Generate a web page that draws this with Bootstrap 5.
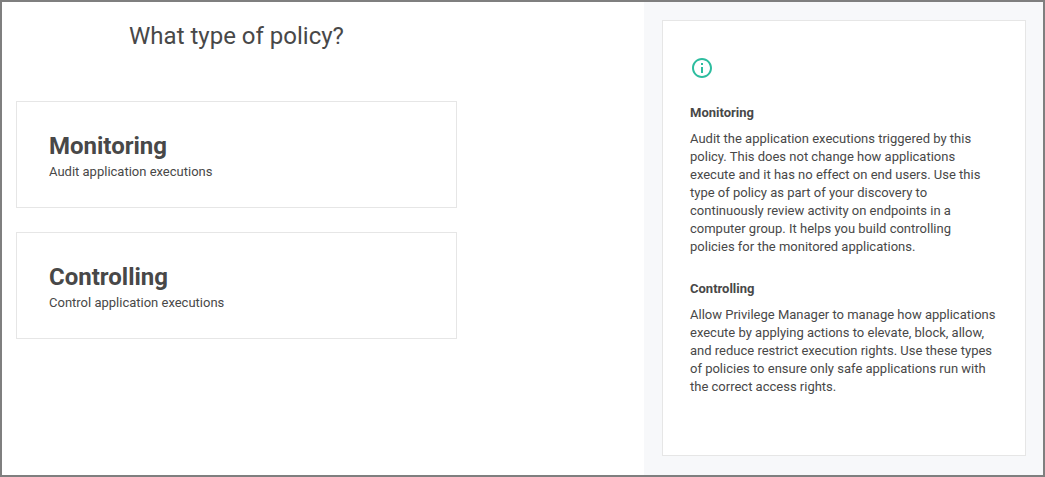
<!DOCTYPE html>
<html lang="en">
<head>
<meta charset="utf-8">
<title>Policy type</title>
<link href="https://cdn.jsdelivr.net/npm/bootstrap@5.3.0/dist/css/bootstrap.min.css" rel="stylesheet">
<style>
body{font-family:Roboto,"Liberation Sans",sans-serif;font-size:13px;line-height:18px;color:#484848;height:477px;overflow:hidden}
.frame{height:477px;border:2px solid #7f7f7f}
.choices{width:642px;padding:19px 14px 0}
.page-title{font-size:24px;line-height:30px;font-weight:400;width:441px;margin-bottom:50px}
.choice{width:441px;height:107px;border:1px solid #e6e6e6;border-radius:0;padding:28px 32px 0;margin-bottom:24px;color:inherit}
.choice h2{font-size:24px;line-height:32px;font-weight:700;margin:0 0 1px}
.side{background:#f7f8fa;padding:18px 17px 19px 18px}
.info{border:1px solid #e6e6e6;border-radius:0;padding:35px 27px 0;color:inherit}
.info h3{font-size:13px;line-height:18px;font-weight:700;margin:0 0 8px}
.info p{margin:0 0 24px}
.info svg{margin-bottom:24px}
</style>
</head>
<body>
<div class="frame d-flex bg-white">
<main class="choices flex-shrink-0">
<h1 class="page-title text-center">What type of policy?</h1>
<a class="card choice text-decoration-none" href="#"><h2>Monitoring</h2><span>Audit application executions</span></a>
<a class="card choice text-decoration-none" href="#"><h2>Controlling</h2><span>Control application executions</span></a>
</main>
<aside class="side flex-grow-1 d-flex">
<section class="card info flex-grow-1 d-block">
<svg class="d-block" width="24" height="24" viewBox="0 0 24 24" fill="#2dbd9f"><path d="M11 7h2v2h-2zm0 4h2v6h-2zm1-9C6.480 2 2 6.480 2 12s4.480 10 10 10 10-4.480 10-10S17.520 2 12 2zm0 18c-4.410 0-8-3.590-8-8s3.590-8 8-8 8 3.590 8 8-3.590 8-8 8z"/></svg>
<h3>Monitoring</h3>
<p>Audit the application executions triggered by this<br>policy. This does not change how applications<br>execute and it has no effect on end users. Use this<br>type of policy as part of your discovery to<br>continuously review activity on endpoints in a<br>computer group. It helps you build controlling<br>policies for the monitored applications.</p>
<h3>Controlling</h3>
<p class="text-nowrap">Allow Privilege Manager to manage how applications<br>execute by applying actions to elevate, block, allow,<br>and reduce restrict execution rights. Use these types<br>of policies to ensure only safe applications run with<br>the correct access rights.</p>
</section>
</aside>
</div>
<script src="https://cdn.jsdelivr.net/npm/bootstrap@5.3.0/dist/js/bootstrap.bundle.min.js"></script>
</body>
</html>
